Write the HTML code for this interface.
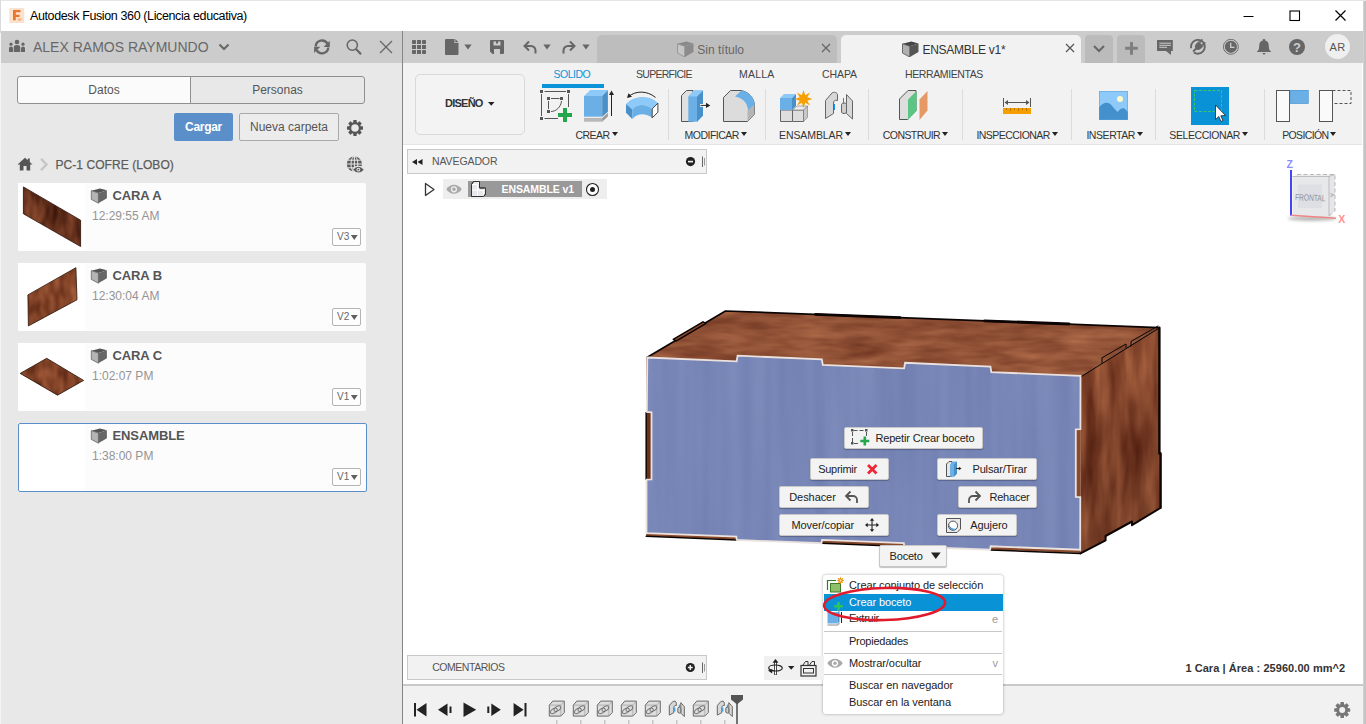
<!DOCTYPE html>
<html lang="es">
<head>
<meta charset="utf-8">
<title>Autodesk Fusion 360 (Licencia educativa)</title>
<style>
*{box-sizing:border-box;margin:0;padding:0}
html,body{width:1366px;height:724px;overflow:hidden;background:#fff;font-family:"Liberation Sans",sans-serif;color:#333}
.abs{position:absolute}
#app{position:relative;width:1366px;height:724px;overflow:hidden;background:#fff}
.t{position:absolute;white-space:nowrap;line-height:1}
/* title bar */
#titlebar{left:0;top:0;width:1366px;height:31px;background:#fff}
/* left panel */
#lp{left:0;top:31px;width:402px;height:693px;background:#e8e8e8}
#lphead{left:1px;top:31px;width:401px;height:32px;background:#cccccc}
#split{left:402px;top:31px;width:1px;height:693px;background:#858585}
.seg{border:1px solid #8f8f8f;font-size:12px;color:#555;text-align:center;line-height:26px;height:28px}
.btn{border-radius:2px;font-size:12px;text-align:center;height:28px;line-height:29px}
.card{left:18px;width:348px;height:68px;background:#fcfcfc;border-radius:2px}
.card .th{position:absolute;left:0;top:0;width:67px;height:100%;background:#fff}
.card .nm{position:absolute;left:94.500px;top:5.600px;font-size:13px;font-weight:bold;color:#555;line-height:13px;white-space:nowrap;letter-spacing:-0.1px}
.card .tm{position:absolute;left:74px;top:27px;font-size:12px;color:#949494;line-height:12px;white-space:nowrap}
.card .vb{position:absolute;left:314px;top:45px;width:28.500px;height:18px;border:1px solid #b4b4b4;background:#fdfdfd;font-size:10px;color:#666;line-height:15.500px;padding-left:4px;border-radius:2px}
.card .vb:after{content:"";position:absolute;right:1.500px;top:5.500px;width:7.500px;height:5.500px;background:#606060;clip-path:polygon(0 0,100% 0,50% 100%)}
.card .cube{position:absolute;left:72px;top:4px}
/* main */
#topbar{left:403px;top:31px;width:960px;height:32px;background:#cccccc}
#ribbon{left:403px;top:63px;width:959px;height:82px;background:#f2f2f2;border-bottom:1px solid #e4e4e4}
#canvas{left:403px;top:145px;width:960px;height:539px;background:#fff}
#timeline{left:403px;top:684px;width:960px;height:40px;background:#f1f1f1;border-top:2px solid #c9c9c9}
#redge{left:1363px;top:0;width:3px;height:724px;background:linear-gradient(to right,#dedede 0,#c4c4c4 1px,#c4c4c4 3px)}
.rt{position:absolute;font-size:11px;color:#444;white-space:nowrap;line-height:11px;top:69px}
.rl{position:absolute;font-size:11px;color:#333;white-space:nowrap;line-height:11px;top:130px}
.rl:after{content:"";display:inline-block;margin-left:2px;border:3.5px solid transparent;border-top:4px solid #222;border-bottom:0;vertical-align:3px}
.vsep{position:absolute;top:89px;width:1px;height:51px;background:#dcdcdc}
.mm{position:absolute;height:20px;background:#f3f3f3;border:1px solid #c8c8c8;border-radius:2px;font-size:11px;color:#222;line-height:18px;white-space:nowrap;box-shadow:0 1px 1px rgba(0,0,0,.25)}
.mm span{position:absolute;top:0}
#ctx{left:823px;top:575px;width:180px;height:139px;background:#fff;border-radius:3px;box-shadow:0 0 3px rgba(0,0,0,.35)}
#ctx .it{position:absolute;left:26px;font-size:11px;color:#222;line-height:11px;white-space:nowrap}
#ctx .sep{position:absolute;left:1px;width:178px;height:1px;background:#c8c8c8}
#ctx .sc{position:absolute;right:5px;font-size:11px;color:#999;line-height:11px}
</style>
</head>
<body>
<div id="app">

<!-- TITLE BAR -->
<div id="titlebar" class="abs">
  <svg class="abs" style="left:9px;top:7.500px" width="15.500" height="15" viewBox="0 0 16 16">
    <rect x="0" y="0" width="16" height="16" rx="1" fill="#fbe2cf"/>
    <path d="M4 2h8v2.6H7v2.6h4v2.4H7V13H4z" fill="#e8762c"/>
    <path d="M9 11h4v2.5H9z" fill="#f5b58a"/>
  </svg>
  <div class="t" style="left:30px;top:9.600px;font-size:12.500px;color:#000;letter-spacing:-0.38px">Autodesk Fusion 360 (Licencia educativa)</div>
  <svg class="abs" style="left:1239.500px;top:7.500px" width="112" height="16" viewBox="0 0 112 16">
    <path d="M3.5 8.5h10" stroke="#000" stroke-width="1" fill="none"/>
    <rect x="50" y="3" width="9.500" height="9.500" stroke="#000" stroke-width="1.100" fill="none"/>
    <path d="M95.500 2.500l10 10M105.500 2.500l-10 10" stroke="#000" stroke-width="1.200" fill="none"/>
  </svg>
</div>

<!-- LEFT PANEL -->
<div id="lp" class="abs"></div>
<div id="lphead" class="abs"></div>
<div id="split" class="abs"></div>

<svg class="abs" style="left:8px;top:39px" width="18" height="14" viewBox="0 0 18 14">
  <g fill="#666"><circle cx="9" cy="3" r="2.300"/><path d="M5.800 13V8.500a3.200 2.400 0 0 1 6.400 0V13z"/>
  <circle cx="3" cy="5.200" r="1.600"/><path d="M1 13V9.300a2 1.700 0 0 1 4 0V13z"/>
  <circle cx="15" cy="5.200" r="1.600"/><path d="M13 13V9.300a2 1.700 0 0 1 4 0V13z"/></g>
</svg>
<div class="t" style="left:33px;top:39.800px;font-size:14px;color:#686868">ALEX RAMOS RAYMUNDO</div>
<svg class="abs" style="left:217px;top:42px" width="14" height="10" viewBox="0 0 14 10"><path d="M2.500 2.500l4.500 4.500l4.500-4.500" fill="none" stroke="#666" stroke-width="2"/></svg>
<svg class="abs" style="left:312px;top:38px" width="20" height="18" viewBox="0 0 20 18">
  <g fill="none" stroke="#666" stroke-width="2.400"><path d="M3.700 8.300A6.300 6.300 0 0 1 15.400 5.600"/><path d="M16.300 9.500A6.300 6.300 0 0 1 4.600 12.200"/></g>
  <path d="M17.800 2.800V9H11.600z" fill="#666"/><path d="M2.100 15V8.800H8.300z" fill="#666"/>
</svg>
<svg class="abs" style="left:344px;top:38px" width="20" height="18" viewBox="0 0 20 18"><circle cx="8.300" cy="7.100" r="5.100" fill="none" stroke="#666" stroke-width="1.500"/><path d="M12 11l5 5.200" stroke="#666" stroke-width="2.200" fill="none"/></svg>
<svg class="abs" style="left:378px;top:39px" width="16" height="16" viewBox="0 0 16 16"><path d="M2 2l12 12M14 2L2 14" stroke="#666" stroke-width="1.300" fill="none"/></svg>


<div class="abs seg" style="left:17px;top:76px;width:174px;background:#fbfbfb;border-radius:3px 0 0 3px">Datos</div>
<div class="abs seg" style="left:190px;top:76px;width:175px;background:#e8e8e8;border-radius:0 3px 3px 0">Personas</div>
<div class="abs btn" style="left:174px;top:113px;width:59px;background:#5b8fca;color:#fff;font-weight:bold;letter-spacing:-0.3px">Cargar</div>
<div class="abs btn" style="left:239px;top:113px;width:100px;border:1px solid #a9a9a9;background:#ececec;color:#555;line-height:27px">Nueva carpeta</div>
<svg class="abs" style="left:346px;top:119px" width="18" height="18" viewBox="0 0 18 18">
  <g transform="translate(9 9)"><g fill="#555"><rect x="-1.700" y="-8" width="3.400" height="16" rx=".5"/><rect x="-1.700" y="-8" width="3.400" height="16" rx=".5" transform="rotate(45)"/><rect x="-1.700" y="-8" width="3.400" height="16" rx=".5" transform="rotate(90)"/><rect x="-1.700" y="-8" width="3.400" height="16" rx=".5" transform="rotate(135)"/><circle r="6"/></g><circle r="3.800" fill="#e8e8e8"/><circle r="2.400" fill="none" stroke="#555" stroke-width="0"/></g>
</svg>
<svg class="abs" style="left:17px;top:157px" width="16" height="14" viewBox="0 0 16 14"><path d="M8 .8L.5 7.500h2.300V13.500h3.700V9h3v4.500h3.700V7.500h2.300L12.800 5V1.500h-2V3.200z" fill="#555"/></svg>
<svg class="abs" style="left:39px;top:158px" width="10" height="13" viewBox="0 0 10 13"><path d="M2 .8l5.500 5.700L2 12.200" fill="none" stroke="#c6c6c6" stroke-width="2.400"/></svg>
<div class="t" style="left:55.500px;top:158.700px;font-size:12px;color:#5c5c5c;letter-spacing:.06px;-webkit-text-stroke:.25px #5c5c5c">PC-1 COFRE (LOBO)</div>
<svg class="abs" style="left:346px;top:156px" width="19" height="18" viewBox="0 0 19 18">
  <circle cx="8.400" cy="8" r="7.600" fill="#5a5a5a"/>
  <g stroke="#e8e8e8" stroke-width="1" fill="none"><ellipse cx="8.400" cy="8" rx="3.400" ry="7.600"/><path d="M.8 8h15.200M8.400 .4v15.200M2 4.200h12.800M2 11.800h12.800"/></g>
  <ellipse cx="12.400" cy="13.700" rx="6" ry="3.900" fill="#e8e8e8"/>
  <path d="M7 13.700q5.400-5.800 10.800 0q-5.400 5.800-10.800 0z" fill="#5a5a5a"/><circle cx="12.400" cy="13.700" r="1.900" fill="#e8e8e8"/><circle cx="12.400" cy="13.700" r=".9" fill="#5a5a5a"/>
</svg>
<div class="abs card" style="top:183px"><div class="th"></div><svg class="cube" width="18" height="17" viewBox="90 187 18 17"><path d="M91.300 190.700L99.900 188.400L106.900 190.300L98.400 193z" fill="#555"/><path d="M91.300 190.700L98.400 193V203.200L91.300 199.400z" fill="#b4b4b4" stroke="#666" stroke-width=".8" stroke-linejoin="round"/><path d="M98.400 193L106.900 190.300V198.300L98.400 203.200z" fill="#666"/></svg><div class="nm">CARA A</div><div class="tm">12:29:55 AM</div><div class="vb">V3</div></div>
<div class="abs card" style="top:263px"><div class="th"></div><svg class="cube" width="18" height="17" viewBox="90 187 18 17"><path d="M91.300 190.700L99.900 188.400L106.900 190.300L98.400 193z" fill="#555"/><path d="M91.300 190.700L98.400 193V203.200L91.300 199.400z" fill="#b4b4b4" stroke="#666" stroke-width=".8" stroke-linejoin="round"/><path d="M98.400 193L106.900 190.300V198.300L98.400 203.200z" fill="#666"/></svg><div class="nm">CARA B</div><div class="tm">12:30:04 AM</div><div class="vb">V2</div></div>
<div class="abs card" style="top:343px"><div class="th"></div><svg class="cube" width="18" height="17" viewBox="90 187 18 17"><path d="M91.300 190.700L99.900 188.400L106.900 190.300L98.400 193z" fill="#555"/><path d="M91.300 190.700L98.400 193V203.200L91.300 199.400z" fill="#b4b4b4" stroke="#666" stroke-width=".8" stroke-linejoin="round"/><path d="M98.400 193L106.900 190.300V198.300L98.400 203.200z" fill="#666"/></svg><div class="nm">CARA C</div><div class="tm">1:02:07 PM</div><div class="vb">V1</div></div>
<div class="abs card" style="top:423px;height:69px"><div class="th"></div><svg class="cube" width="18" height="17" viewBox="90 187 18 17"><path d="M91.300 190.700L99.900 188.400L106.900 190.300L98.400 193z" fill="#555"/><path d="M91.300 190.700L98.400 193V203.200L91.300 199.400z" fill="#b4b4b4" stroke="#666" stroke-width=".8" stroke-linejoin="round"/><path d="M98.400 193L106.900 190.300V198.300L98.400 203.200z" fill="#666"/></svg><div class="nm">ENSAMBLE</div><div class="tm">1:38:00 PM</div><div class="vb">V1</div></div>



<svg class="abs" style="left:18px;top:183px" width="68" height="228" viewBox="18 183 68 228">
<defs>
<filter id="ft1" x="0" y="0" width="100%" height="100%" color-interpolation-filters="sRGB"><feTurbulence type="fractalNoise" baseFrequency="0.12 0.04" numOctaves="2" seed="5" result="n"/><feColorMatrix in="n" type="matrix" values="0.45 0 0 0 0.165  0.3 0 0 0 0.04  0.2 0 0 0 0.01  0 0 0 0 1"/><feComposite in2="SourceAlpha" operator="in"/></filter>
<filter id="ft2" x="0" y="0" width="100%" height="100%" color-interpolation-filters="sRGB"><feTurbulence type="fractalNoise" baseFrequency="0.1 0.05" numOctaves="2" seed="9" result="n"/><feColorMatrix in="n" type="matrix" values="0.5 0 0 0 0.27  0.36 0 0 0 0.09  0.26 0 0 0 0.03  0 0 0 0 1"/><feComposite in2="SourceAlpha" operator="in"/></filter>
</defs>
<polygon points="23.400,186.900 80.600,220.200 80.600,246.500 23.400,213.800" fill="#6b3018" filter="url(#ft1)"/>
<polygon points="23.400,186.900 80.600,220.200 80.600,246.500 23.400,213.800" fill="none" stroke="#2a1008" stroke-width=".8"/>
<polygon points="27.900,294.900 75.900,267.700 77,299.800 28.400,325.900" fill="#7a3d22" filter="url(#ft2)"/>
<polygon points="27.900,294.900 75.900,267.700 77,299.800 28.400,325.900" fill="none" stroke="#2a1008" stroke-width=".8"/>
<polygon points="20.200,373.400 46.700,358.300 83.600,380.400 57.500,395.200" fill="#8a4526" filter="url(#ft2)"/>
<polygon points="20.200,373.400 46.700,358.300 83.600,380.400 57.500,395.200" fill="none" stroke="#2a1008" stroke-width=".8"/>
</svg>

<div class="abs" style="left:17.500px;top:422.500px;width:349px;height:69.500px;border:1px solid #5b8fca;border-radius:2px"></div>
<!-- MAIN -->
<div id="topbar" class="abs"></div>
<div id="ribbon" class="abs"></div>
<div id="canvas" class="abs"></div>
<div id="timeline" class="abs"></div>
<div id="redge" class="abs"></div>
<div class="abs" style="left:0;top:0;width:1366px;height:1px;background:#e6e6e6"></div>
<div class="abs" style="left:0;top:0;width:1px;height:33px;background:#d9dbde"></div><div class="abs" style="left:0;top:33px;width:1px;height:691px;background:#f4f4f4"></div>

<svg class="abs" style="left:412px;top:40px" width="14" height="14" viewBox="0 0 14 14"><g fill="#666"><rect x="0" y="0" width="4" height="4" rx=".8"/><rect x="5" y="0" width="4" height="4"/><rect x="10" y="0" width="4" height="4" rx=".8"/><rect x="0" y="5" width="4" height="4"/><rect x="5" y="5" width="4" height="4"/><rect x="10" y="5" width="4" height="4"/><rect x="0" y="10" width="4" height="4" rx=".8"/><rect x="5" y="10" width="4" height="4"/><rect x="10" y="10" width="4" height="4" rx=".8"/></g></svg>
<svg class="abs" style="left:445px;top:39px" width="14" height="16" viewBox="0 0 14 16"><path d="M1 0h8.500v4H13.500v11a1 1 0 0 1-1 1H1a1 1 0 0 1-1-1V1a1 1 0 0 1 1-1z" fill="#666"/><path d="M10.300 0l3.200 3.200h-3.200z" fill="#666"/></svg>
<svg class="abs" style="left:464px;top:44px" width="8" height="6" viewBox="0 0 8 6"><path d="M.3 .5h7.400L4 5.500z" fill="#666"/></svg>
<svg class="abs" style="left:490px;top:40px" width="14" height="14" viewBox="0 0 14 14"><path d="M1 0h12a1 1 0 0 1 1 1v12a1 1 0 0 1-1 1H2.500L0 11.500V1a1 1 0 0 1 1-1z" fill="#666"/><rect x="3.500" y="1.500" width="7" height="4" fill="#ccc"/><rect x="6" y="0" width="2" height="3.500" fill="#666"/><rect x="4" y="9" width="6" height="5" fill="#ccc"/></svg>
<svg class="abs" style="left:522px;top:40px" width="16" height="15" viewBox="0 0 16 15"><path d="M7 1.500L2.500 6L7 10.500M2.500 6H9a4.500 4.500 0 0 1 4.500 4.500V13.500" fill="none" stroke="#666" stroke-width="2"/></svg>
<svg class="abs" style="left:543px;top:44px" width="8" height="6" viewBox="0 0 8 6"><path d="M.3 .5h7.400L4 5.500z" fill="#666"/></svg>
<svg class="abs" style="left:561px;top:40px" width="16" height="15" viewBox="0 0 16 15"><path d="M9 1.500L13.500 6L9 10.500M13.500 6H7a4.500 4.500 0 0 0-4.500 4.500V13.500" fill="none" stroke="#666" stroke-width="2"/></svg>
<svg class="abs" style="left:582px;top:44px" width="8" height="6" viewBox="0 0 8 6"><path d="M.3 .5h7.400L4 5.500z" fill="#666"/></svg>
<div class="abs" style="left:597px;top:35px;width:240px;height:28px;background:#bdbdbd;border-radius:5px 5px 0 0"></div>
<svg class="abs" style="left:676.5px;top:40.5px" width="17" height="16.500" viewBox="90.800 188 16.600 15.600" preserveAspectRatio="none"><path d="M91.300 190.700L99.900 188.400L106.900 190.300L98.400 193z" fill="#8a8a8a"/><path d="M91.300 190.700L98.400 193V203.200L91.300 199.400z" fill="#c6c6c6" stroke="#8f8f8f" stroke-width=".8" stroke-linejoin="round"/><path d="M98.400 193L106.900 190.300V198.300L98.400 203.200z" fill="#8c8c8c"/></svg>
<div class="t" style="left:697.300px;top:43.500px;font-size:12px;color:#666">Sin título</div>
<svg class="abs" style="left:821px;top:43px" width="10" height="10" viewBox="0 0 10 10"><path d="M1 1l8 8M9 1L1 9" stroke="#666" stroke-width="1.200" fill="none"/></svg>
<div class="abs" style="left:841px;top:35px;width:240px;height:28px;background:#f2f2f2;border-radius:5px 5px 0 0"></div>
<svg class="abs" style="left:901.5px;top:40.5px" width="17" height="16.500" viewBox="90.800 188 16.600 15.600" preserveAspectRatio="none"><path d="M91.300 190.700L99.900 188.400L106.900 190.300L98.400 193z" fill="#444"/><path d="M91.300 190.700L98.400 193V203.200L91.300 199.400z" fill="#b0b0b0" stroke="#555" stroke-width=".8" stroke-linejoin="round"/><path d="M98.400 193L106.900 190.300V198.300L98.400 203.200z" fill="#555"/></svg>
<div class="t" style="left:922.400px;top:43.500px;font-size:12px;color:#333;letter-spacing:-0.25px">ENSAMBLE v1*</div>
<svg class="abs" style="left:1065px;top:43px" width="10" height="10" viewBox="0 0 10 10"><path d="M1 1l8 8M9 1L1 9" stroke="#555" stroke-width="1.200" fill="none"/></svg>
<div class="abs" style="left:1085px;top:35px;width:28px;height:28px;background:#bbbbbb;border-radius:4px 4px 0 0"></div>
<svg class="abs" style="left:1092px;top:44px" width="14" height="10" viewBox="0 0 14 10"><path d="M2 2l5 5l5-5" fill="none" stroke="#666" stroke-width="2"/></svg>
<div class="abs" style="left:1117px;top:35px;width:28px;height:28px;background:#bbbbbb;border-radius:4px 4px 0 0"></div>
<svg class="abs" style="left:1124px;top:41px" width="15" height="15" viewBox="0 0 15 15"><path d="M7.500 1v12.700M1.150 7.350h12.700" stroke="#7f7f7f" stroke-width="3" fill="none"/></svg>
<svg class="abs" style="left:1157px;top:40px" width="17" height="16" viewBox="0 0 17 16"><path d="M0 0h15.800v11H14V15L9 11H0z" fill="#666"/><path d="M2.300 3.200h11.700M2.300 5.300h11.700M2.300 7.300h7.700" stroke="#ccc" stroke-width="1"/></svg>
<svg class="abs" style="left:1190px;top:39px" width="16" height="16" viewBox="0 0 16 16"><circle cx="7.900" cy="7.800" r="6.900" fill="none" stroke="#666" stroke-width="1.900" stroke-dasharray="38.350 5" stroke-dashoffset="23.350"/><g transform="rotate(45 7.900 7.800) translate(7.900 7.800) scale(1.250) translate(-7.900 -8.300)"><path d="M5.100 4.800h5.600v3a2.800 2.800 0 0 1-2 2.700v3.200h-1.600v-3.200a2.800 2.800 0 0 1-2-2.700z" fill="#666"/><path d="M6.300 4.800V1.600M9.500 4.800V1.600" stroke="#666" stroke-width="1.400"/></g></svg>
<svg class="abs" style="left:1223px;top:39px" width="16" height="16" viewBox="0 0 16 16"><circle cx="7.900" cy="7.800" r="7.500" fill="none" stroke="#666" stroke-width=".9"/><circle cx="7.900" cy="7.800" r="6.100" fill="#666"/><path d="M7.700 3.700v4.600h3.800" fill="none" stroke="#ccc" stroke-width="1.300"/></svg>
<svg class="abs" style="left:1257px;top:39px" width="14" height="16" viewBox="0 0 14 16"><path d="M7 0a1.200 1.200 0 0 1 1.200 1.500C11 2.300 11.800 4.500 11.800 7c0 3 .7 4.500 2.200 5.500V13H0v-.5C1.500 11.500 2.200 10 2.200 7c0-2.500 .8-4.700 3.600-5.500A1.200 1.200 0 0 1 7 0z" fill="#666"/><path d="M5.500 14h3a1.500 1.500 0 0 1-3 0z" fill="#666"/></svg>
<div class="abs" style="left:1289px;top:39px;width:16px;height:16px;border-radius:8px;background:#666;color:#ccc;font-size:13px;font-weight:bold;text-align:center;line-height:17px">?</div>
<div class="abs" style="left:1325px;top:34px;width:25px;height:25px;border-radius:13px;background:#efefef;color:#555;font-size:11px;text-align:center;line-height:26px;letter-spacing:.3px">AR</div>

<div class="abs" style="left:415px;top:73.500px;width:110px;height:61px;border:1px solid #d9d9d9;border-radius:5px;background:#f3f3f3"></div>
<div class="t" style="left:445px;top:98px;font-size:11px;font-weight:bold;color:#333;letter-spacing:-0.75px">DISEÑO</div>
<svg class="abs" style="left:488px;top:102px" width="7" height="4" viewBox="0 0 7 4"><path d="M0 0h6.500L3.250 3.800z" fill="#222"/></svg>
<div class="rt" style="left:553.5px;font-size:10.500px;letter-spacing:-0.48px;color:#0d93d8">SOLIDO</div>
<div class="rt" style="left:636px;font-size:10.500px;letter-spacing:-0.73px">SUPERFICIE</div>
<div class="rt" style="left:739px;font-size:10.500px;letter-spacing:0.21px">MALLA</div>
<div class="rt" style="left:822px;font-size:10.500px;letter-spacing:-0.08px">CHAPA</div>
<div class="rt" style="left:905px;font-size:10.500px;letter-spacing:-0.39px">HERRAMIENTAS</div>
<div class="rl" style="left:575.5px;font-size:10.500px;letter-spacing:-0.55px">CREAR</div>
<div class="rl" style="left:684.6px;font-size:10.500px;letter-spacing:-0.52px">MODIFICAR</div>
<div class="rl" style="left:779px;font-size:10.500px;letter-spacing:-0.09px">ENSAMBLAR</div>
<div class="rl" style="left:882.8px;font-size:10.500px;letter-spacing:-0.58px">CONSTRUIR</div>
<div class="rl" style="left:976.4px;font-size:10.500px;letter-spacing:-0.54px">INSPECCIONAR</div>
<div class="rl" style="left:1086.4px;font-size:10.500px;letter-spacing:-0.44px">INSERTAR</div>
<div class="rl" style="left:1169.3px;font-size:10.500px;letter-spacing:-0.42px">SELECCIONAR</div>
<div class="rl" style="left:1282.2px;font-size:10.500px;letter-spacing:-0.64px">POSICIÓN</div>
<div class="abs" style="left:541.500px;top:84px;width:62px;height:3.500px;background:#0d93d8"></div>
<div class="vsep" style="left:667.5px"></div>
<div class="vsep" style="left:764.5px"></div>
<div class="vsep" style="left:867.5px"></div>
<div class="vsep" style="left:961.5px"></div>
<div class="vsep" style="left:1070.5px"></div>
<div class="vsep" style="left:1155px"></div>
<div class="vsep" style="left:1263.5px"></div>
<svg class="abs" style="left:404px;top:86px" width="959" height="42" viewBox="404 86 959 42">
<!-- sketch -->
<g fill="none" stroke="#555" stroke-width="1"><path d="M544.500 91.500H566M568.500 94V107M541.500 94V116M544.500 118.500H558"/><path d="M551 98.500H559.500M548.500 101V109"/><path d="M561.500 101C561 107 556 111.500 551 111.500" /></g>
<g fill="#555"><rect x="540" y="90" width="3" height="3"/><rect x="567" y="90" width="3" height="3"/><rect x="540" y="117" width="3" height="3"/><rect x="547" y="97" width="3" height="3"/><rect x="560" y="97" width="3" height="3"/><rect x="547" y="110" width="3" height="3"/></g>
<path d="M563 108h4v5h5v4h-5v5h-4v-5h-5v-4h5z" fill="#22a84a"/>
<!-- extrude -->
<path d="M584 96h18.200v20.700H584z" fill="#6aafe6"/><path d="M584 96l6.200-6h17.600l-5.600 6z" fill="#8ecaf9"/><path d="M602.200 96l5.700-6v21.700l-5.700 5z" fill="#4a90c8"/>
<path d="M584 117.900h18.200v3.800H584z" fill="#b8b8b8"/><path d="M602.200 117.900l5.700-5.200v3.800l-5.700 5.200z" fill="#9a9a9a"/>
<path d="M611.500 116V92" stroke="#222" stroke-width="1" fill="none"/><path d="M609 95l2.500-4.500l2.500 4.500z" fill="#222"/>
<!-- revolve -->
<path d="M626 104.100C633 95 651 94.500 657.900 103.100L652.200 108.900C646 103.500 637 103.500 632.200 109.300z" fill="#8ecaf9"/>
<path d="M626 104.100L632.200 109.300V118.900L626 112.700z" fill="#4a90c8"/>
<path d="M632.200 109.300C637 103.500 646 103.500 652.200 108.900V117.900C646 112.500 637 113 632.200 118.900z" fill="#6aafe6"/>
<path d="M652.200 108.900L657.900 103.100V112.200L652.200 117.900z" fill="#fff" stroke="#444" stroke-width="1"/>
<path d="M655.500 97.400C647 90.500 636 90.500 628.500 96.500" fill="none" stroke="#222" stroke-width="1"/><path d="M627 98l1.500-4.800l3.500 3.600z" fill="#222"/>
<!-- press pull -->
<path d="M681.500 121.500V95.500L686.500 90.500H693V121.500z" fill="#e0e0e0" stroke="#555" stroke-width="1"/>
<path d="M688.300 96.500L694 90.500H703V115.500L697 121.800H688.300z" fill="#6aafe6"/><path d="M697 96.500L703 90.500V115.500L697 121.800z" fill="#4a90c8"/><path d="M688.300 96.500L694 90.500H703L697 96.500z" fill="#8ecaf9"/>
<rect x="700" y="104" width="5" height="2.800" fill="#fff"/><path d="M700.500 105.400H708" stroke="#222" stroke-width="1"/><path d="M706 102.800l4.300 2.600l-4.300 2.600z" fill="#222"/>
<!-- fillet -->
<path d="M723.500 121.500V97.500L730.500 90.500H741C749 92 754 98 754.500 105.500V114.500L747.500 121.500z" fill="#dcdcdc" stroke="#555" stroke-width="1"/>
<path d="M747.500 121.500V110L754.500 104.500V114.500z" fill="#b5b5b5"/>
<path d="M735 96.500L741.500 90.500C749.500 92 754.500 98 754.700 104.500L748 110C747.500 103 743 98 735 96.500z" fill="#6aafe6"/>
<!-- new component -->
<path d="M780.500 110h12v11.500h-12z" fill="#dedede" stroke="#666" stroke-width="1"/><path d="M792.500 110h11v11.500h-11z" fill="#dedede" stroke="#666" stroke-width="1"/><path d="M792.500 110l4.500-4h10.500l-4 4z" fill="#ececec" stroke="#777" stroke-width=".6"/><path d="M803.500 110l4-4v11.500l-4 4z" fill="#c8c8c8" stroke="#777" stroke-width=".6"/>
<path d="M780 98h12v12h-12z" fill="#6aafe6"/><path d="M780 98l4-4h12l-4 4z" fill="#8ecaf9"/><path d="M792 98l4-4v12l-4 4z" fill="#4a90c8"/>
<path d="M803.500 90l1.700 5.200l4.800-2.700l-2.700 4.800l5.200 1.700l-5.200 1.700l2.700 4.800l-4.800-2.700l-1.700 5.200l-1.700-5.200l-4.800 2.700l2.700-4.800l-5.200-1.700l5.200-1.700l-2.700-4.800l4.800 2.700z" fill="#f5a000"/>
<!-- joint -->
<path d="M825.500 118.500V100.500L832 93C834 91.500 837.500 92.500 837.500 95V100.500C835 99.500 833.500 101 833.500 103V113.500z" fill="#d8d8d8" stroke="#666" stroke-width="1"/>
<path d="M846.500 94.500L852.500 101V119L846.500 113.500z" fill="#d8d8d8" stroke="#666" stroke-width="1"/><path d="M841.500 104.500C841.500 102.500 846.500 102.500 846.500 104.500V112C846.500 114 841.500 114 841.500 112z" fill="#cfcfcf" stroke="#666" stroke-width="1"/>
<path d="M834.500 104V110M843.500 98V104" stroke="#1a8fe0" stroke-width="1"/>
<!-- construct -->
<path d="M899.500 119.500V99L908 90.500H916V110.500L907.500 119.500z" fill="#dedede" stroke="#555" stroke-width="1"/>
<path d="M908 99.500L916.500 91V111L908 120z" fill="#5cc583"/><path d="M919.500 99.500L927.500 91V110.500L919.500 120z" fill="#e69965"/>
<!-- measure -->
<rect x="1003" y="108" width="28" height="6" fill="#f5a000"/><path d="M1006.500 108v2M1010.500 108v3M1014.500 108v2M1018.500 108v3M1022.500 108v2M1026.500 108v3" stroke="#b87400" stroke-width="1"/>
<path d="M1003.500 98V107M1030.500 98V107M1005 102.500H1029" stroke="#555" stroke-width="1" fill="none"/><path d="M1008 100l-3.500 2.500l3.500 2.500zM1026 100l3.500 2.500l-3.500 2.500z" fill="#555"/>
<!-- insert -->
<rect x="1099" y="91" width="29" height="29" fill="#8ecaf9"/><path d="M1099 107.500C1102 103.500 1106 101.500 1109.500 103.500C1112 105 1114 109 1117.500 112C1120 109 1122 107.500 1124.500 108.500L1128 112V120H1099z" fill="#4490cc"/><circle cx="1120" cy="99" r="3" fill="#fffac8"/>
<rect x="1099.250" y="91.250" width="28.500" height="28.500" fill="none" stroke="#5aa0d8" stroke-width=".5"/>
<!-- select -->
<rect x="1191" y="87" width="38" height="38" fill="#0a92d6"/><rect x="1194.500" y="90.500" width="27" height="21" fill="none" stroke="#3cc46a" stroke-width="1" stroke-dasharray="3 1.500"/>
<path d="M1215.500 105V119.500L1218.800 116.500L1221 121.500L1223 120.600L1220.800 115.800L1225.500 115.500z" fill="#fff" stroke="#222" stroke-width=".8"/>
<!-- position -->
<rect x="1276.500" y="90.500" width="13" height="31" fill="#fafafa" stroke="#555" stroke-width="1"/><rect x="1290" y="90" width="18.500" height="13.800" fill="#6aafe6"/><rect x="1290" y="90.250" width="18.250" height="13.300" fill="none" stroke="#4a90c8" stroke-width=".5"/>
<rect x="1319.500" y="90.500" width="13" height="31" fill="#fafafa" stroke="#555" stroke-width="1"/><path d="M1332.500 90.500H1351V103.500H1332.500" fill="none" stroke="#555" stroke-width="1" stroke-dasharray="3 2"/>
</svg>


<div class="abs" style="left:407px;top:149px;width:300px;height:25px;background:#f2f2f2;border:1px solid #c9c9c9"></div>
<svg class="abs" style="left:412px;top:158px" width="11" height="8" viewBox="0 0 11 8"><path d="M5 1v6L0 4zM10.500 1v6L5.500 4z" fill="#222"/></svg>
<div class="t" style="left:432px;top:156px;font-size:10.500px;color:#555;letter-spacing:-0.10px">NAVEGADOR</div>
<svg class="abs" style="left:685px;top:156px" width="22" height="12" viewBox="0 0 22 12"><circle cx="5.500" cy="5.600" r="4.600" fill="#222"/><rect x="3" y="4.800" width="5" height="1.600" fill="#f2f2f2"/><path d="M17.500 .5v10.500" stroke="#666" stroke-width="1"/><path d="M19.500 2v7.500" stroke="#999" stroke-width="1"/></svg>
<div class="abs" style="left:443px;top:179px;width:164px;height:20px;background:#eeeeee"></div>
<svg class="abs" style="left:424px;top:182px" width="12" height="15" viewBox="0 0 12 15"><path d="M1.500 1.500L10 7.500L1.500 13.500z" fill="#fff" stroke="#333" stroke-width="1.300" stroke-linejoin="round"/></svg>
<svg class="abs" style="left:446px;top:184px" width="16" height="11" viewBox="0 0 16 11"><path d="M.3 5.300C4 -.8 12 -.8 15.700 5.300C12 11.200 4 11.200 .3 5.300z" fill="#a9a9a9"/><circle cx="8" cy="5.300" r="3.100" fill="#eee"/><circle cx="8" cy="5.300" r="1.700" fill="#a9a9a9"/></svg>
<div class="abs" style="left:468px;top:181px;width:114px;height:16px;background:#999"></div>
<svg class="abs" style="left:470px;top:180px" width="18" height="18" viewBox="0 0 18 18"><path d="M1.500 16.500V4.500L3.500 1.500H9.500V8H15.500V14L13.500 16.500z" fill="#e8e8ec" stroke="#333" stroke-width="1" stroke-linejoin="round"/><path d="M7.500 16.500V10L9.500 8M7.500 10H1.500M13.500 16.500V10.500L15.500 8M13.500 10.500H7.500M7.500 4.500H1.500M7.500 4.500L9.500 1.500M7.500 4.500V10" fill="none" stroke="#fff" stroke-width=".9"/><path d="M1.500 16.500V4.500L3.500 1.500H9.500V8H15.500V14L13.500 16.500z" fill="none" stroke="#333" stroke-width="1" stroke-linejoin="round"/></svg>
<div class="t" style="left:501.500px;top:184px;font-size:10.500px;font-weight:bold;color:#fff;letter-spacing:-0.10px">ENSAMBLE v1</div>
<svg class="abs" style="left:585px;top:182px" width="15" height="15" viewBox="0 0 15 15"><circle cx="7.500" cy="7.500" r="6" fill="#fff" stroke="#222" stroke-width="1.100"/><circle cx="7.500" cy="7.500" r="2.500" fill="#222"/></svg>
<!-- viewcube -->
<svg class="abs" style="left:1270px;top:155px" width="90" height="75" viewBox="1270 155 90 75">
<defs><filter id="vb" x="-20%" y="-100%" width="140%" height="300%"><feGaussianBlur stdDeviation="1.500"/></filter></defs>
<ellipse cx="1312" cy="218.500" rx="24" ry="2.500" fill="#bbb" filter="url(#vb)"/>
<path d="M1292.500 176.500L1297 174.500H1335L1329 176.500z" fill="#ececee"/>
<path d="M1329 176.500L1335 174.500V211L1329 216z" fill="#e6e6e9"/>
<rect x="1292.500" y="176.500" width="36.500" height="39.500" fill="#e7e8ea"/>
<rect x="1298" y="184.500" width="24" height="23.500" fill="#dddfe4"/>
<path d="M1297 174.500H1335V211L1329 216" fill="none" stroke="#a8a8a8" stroke-width=".8" stroke-dasharray="4 2.500"/>
<path d="M1329 176.500V216M1292.500 176.500H1329L1335 174.500" fill="none" stroke="#aaa" stroke-width=".7"/>
<path d="M1291 170V215.500" stroke="#4545f2" stroke-width="2"/>
<path d="M1291 215.200L1336 218.300" stroke="#f08585" stroke-width="1.600"/>
<text x="1295" y="200.800" font-family="Liberation Sans, sans-serif" font-size="9" fill="#8d9199" textLength="30.500" lengthAdjust="spacingAndGlyphs" transform="rotate(2 1310 197)">FRONTAL</text>
<text x="1286.500" y="167.800" font-family="Liberation Sans, sans-serif" font-size="10.500" font-weight="bold" fill="#8c8cff">Z</text>
<text x="1338.300" y="222.500" font-family="Liberation Sans, sans-serif" font-size="10.500" font-weight="bold" fill="#ff9090">X</text>
<text x="1331" y="196" font-family="Liberation Sans, sans-serif" font-size="6" fill="#999" transform="rotate(80 1332 194)">A</text>
</svg>


<svg class="abs" style="left:630px;top:300px" width="545" height="265" viewBox="630 300 545 265">
<defs>
<filter id="fw1" x="0" y="0" width="100%" height="100%" color-interpolation-filters="sRGB"><feTurbulence type="fractalNoise" baseFrequency="0.018 0.085" numOctaves="3" seed="7" result="n"/><feColorMatrix in="n" type="matrix" values="0.38 0 0 0 0.372  0.32 0 0 0 0.157  0.24 0 0 0 0.09  0 0 0 0 1"/><feComposite in2="SourceAlpha" operator="in"/></filter>
<filter id="fw2" x="0" y="0" width="100%" height="100%" color-interpolation-filters="sRGB"><feTurbulence type="fractalNoise" baseFrequency="0.07 0.012" numOctaves="3" seed="11" result="n"/><feColorMatrix in="n" type="matrix" values="0.45 0 0 0 0.295  0.36 0 0 0 0.092  0.26 0 0 0 0.04  0 0 0 0 1"/><feComposite in2="SourceAlpha" operator="in"/></filter>
<filter id="fb" x="0" y="0" width="100%" height="100%" color-interpolation-filters="sRGB"><feTurbulence type="fractalNoise" baseFrequency="0.07 0.004" numOctaves="2" seed="3" result="n"/><feColorMatrix in="n" type="matrix" values="0.07 0 0 0 0.432  0.07 0 0 0 0.49  0.06 0 0 0 0.684  0 0 0 0 1"/><feComposite in2="SourceAlpha" operator="in"/></filter>
<linearGradient id="rsh" x1="0" y1="0" x2="0" y2="1"><stop offset="0" stop-color="#000" stop-opacity="0"/><stop offset="1" stop-color="#000" stop-opacity=".12"/></linearGradient>
</defs>
<!-- front wood tabs behind -->
<polygon points="646.2,357.4 1081,375.9 1080.5,553.1 646.2,536.1" fill="#8a4a2c"/>
<path d="M646.200 412V480" stroke="#1a0a04" stroke-width="1.600"/>
<rect x="647" y="412.500" width="4.500" height="66.500" fill="#6b3219"/>
<!-- top face -->
<polygon points="647.3,357.5 725.5,311 1158.7,327.6 1081,375.9" fill="#94543a" filter="url(#fw1)"/>
<!-- right face -->
<polygon points="1081,375.9 1159,327.8 1159.3,453 1160.4,453.5 1160.4,507.5 1132,524.8 1132,521 1105.6,535.5 1105.6,539.8 1080.5,553" fill="#7d4128" filter="url(#fw2)"/>
<polygon points="1081,375.9 1159,327.8 1159.3,453 1160.4,453.5 1160.4,507.5 1132,524.8 1132,521 1105.6,535.5 1105.6,539.8 1080.5,553" fill="url(#rsh)"/>
<!-- edges -->
<g fill="none" stroke="#0c0503" stroke-linejoin="round" stroke-linecap="round">
<path d="M647.300 357.2L725.500 311L1158.700 327.600" stroke-width="1.700"/>
<path d="M815.600 314.300L900 317.600M984.600 320.800L1069 324" stroke-width="2.800"/>
<path d="M676.500 340.800L673.200 339.300L703 321.800L706 323.300z" stroke-width="1.400" fill="#8a4a2c"/>
<path d="M1159.400 327.800V453.500M1160.600 453.500V507.500" stroke-width="2.400"/>
<path d="M1160.400 508L1132 525.200V521.500L1105.600 536V540.300L1080.500 553.400" stroke-width="2"/>
<path d="M1081.400 376.4L1158.500 328.300" stroke-width="1.100"/>
<path d="M1102 362.500V357.800L1126 344V347.500M1131 346V341.500L1158 326" stroke-width="1"/>
<path d="M1080.500 553.4L990.600 549.9M904.300 546.4L822 543.3M736.800 540.0L646.200 536.3" stroke-width="1.500"/>
</g>
<!-- blue face -->
<polygon points="647.3,357.5 736.6,361.3 737.6,355.7 821.8,359.3 822.8,364.9 904.1,368.4 905.1,362.8 990.4,366.5 991.4,372.1 1080.5,375.9 1080.4,429.2 1075.8,429.4 1075.8,497.0 1080.3,497.2 1080.2,549.7 990.6,546.3 990.1,549.7 904.3,546.4 903.8,543.0 822.0,539.9 821.5,543.2 736.8,540.0 736.3,536.6 646.5,533.2 646.5,479.5 651.5,479.3 651.5,412.3 646.8,412.0" fill="#7786b6" filter="url(#fb)"/>
<polygon points="647.3,357.5 736.6,361.3 737.6,355.7 821.8,359.3 822.8,364.9 904.1,368.4 905.1,362.8 990.4,366.5 991.4,372.1 1080.5,375.9 1080.4,429.2 1075.8,429.4 1075.8,497.0 1080.3,497.2 1080.2,549.7 990.6,546.3 990.1,549.7 904.3,546.4 903.8,543.0 822.0,539.9 821.5,543.2 736.8,540.0 736.3,536.6 646.5,533.2 646.5,479.5 651.5,479.3 651.5,412.3 646.8,412.0" fill="none" stroke="#ebe2df" stroke-width="1.800" stroke-linejoin="miter"/>
</svg>

<div class="mm" style="left:843.5px;top:427px;width:139px;height:22px"><span style="left:30.9px;top:1px;letter-spacing:-0.15px">Repetir Crear boceto</span><svg class="abs" style="left:6.5px;top:1.0px" width="19" height="17" viewBox="0 0 19 17"><g fill="none" stroke="#555" stroke-width="1" stroke-dasharray="4 2"><path d="M2.500 1.500H14.500M1.500 3V13.500M15.500 3V8M3 14.500H9"/></g><g fill="#555"><rect x="0" y="0" width="2.500" height="2.500"/><rect x="14" y="0" width="2.500" height="2.500"/><rect x="0" y="13" width="2.500" height="2.500"/></g><path d="M12.500 9h2.600v3.200h3.200v2.600h-3.200v3.200h-2.600v-3.200h-3.200v-2.600h3.200z" fill="#22a84a" transform="translate(0 -1.500)"/></svg></div>
<div class="mm" style="left:809.5px;top:458px;width:79.5px;height:22px"><span style="left:7.7px;top:1px;letter-spacing:-0.28px">Suprimir</span><svg class="abs" style="left:55.0px;top:3.5px" width="13" height="13" viewBox="0 0 13 13"><path d="M2 2l8.500 8.500M10.500 2L2 10.500" stroke="#ee2737" stroke-width="2.800" fill="none"/></svg></div>
<div class="mm" style="left:937.3px;top:458px;width:99.5px;height:22px"><span style="left:34.2px;top:1px;letter-spacing:-0.16px">Pulsar/Tirar</span><svg class="abs" style="left:6.7px;top:1.0px" width="18" height="18" viewBox="0 0 18 18"><path d="M1.500 16.500V4L4 1.500H7V16.500z" fill="#e6e6e6" stroke="#555" stroke-width="1"/><path d="M5 4.500L8 1.500H12V13.500L9 16.800H5z" fill="#6aafe6"/><path d="M9 4.500L12 1.500V13.500L9 16.800z" fill="#4a90c8"/><path d="M11 8.500h3.500" stroke="#222" stroke-width="1"/><path d="M13.800 6.800l2.700 1.700l-2.700 1.700z" fill="#222"/></svg></div>
<div class="mm" style="left:779.4px;top:486.2px;width:89.3px;height:22px"><span style="left:8.8px;top:1px;letter-spacing:-0.06px">Deshacer</span><svg class="abs" style="left:63.6px;top:2.8px" width="16" height="14" viewBox="0 0 16 14"><path d="M6.500 1.500L2 6L6.500 10.500M2 6H9a4 4 0 0 1 4 4V13" fill="none" stroke="#555" stroke-width="1.800"/></svg></div>
<div class="mm" style="left:957.5px;top:486.2px;width:79.3px;height:22px"><span style="left:30.9px;top:1px;letter-spacing:-0.20px">Rehacer</span><svg class="abs" style="left:7.5px;top:2.8px" width="16" height="14" viewBox="0 0 16 14"><path d="M9.500 1.500L14 6L9.500 10.500M14 6H7a4 4 0 0 0-4 4V13" fill="none" stroke="#555" stroke-width="1.800"/></svg></div>
<div class="mm" style="left:779.4px;top:514.3px;width:109.5px;height:22px"><span style="left:11.0px;top:1px;letter-spacing:-0.08px">Mover/copiar</span><svg class="abs" style="left:82.6px;top:1.2px" width="18" height="18" viewBox="0 0 18 18"><g transform="translate(2 2) scale(.78)"><path d="M9 1.500V16.500M1.500 9H16.500" stroke="#222" stroke-width="1.400" fill="none"/><path d="M9 0l2.800 3.500h-5.600zM9 18l2.800-3.500h-5.600zM0 9l3.500-2.800v5.600zM18 9l-3.500-2.800v5.600z" fill="#222"/></g></svg></div>
<div class="mm" style="left:937.3px;top:514.3px;width:79.3px;height:22px"><span style="left:32.0px;top:1px;letter-spacing:-0.09px">Agujero</span><svg class="abs" style="left:6.7px;top:1.7px" width="17" height="17" viewBox="0 0 17 17"><path d="M1.500 1.500H15.500V12L12 15.500H1.500z" fill="#e9e9e9" stroke="#555" stroke-width="1"/><circle cx="8" cy="8.700" r="4.600" fill="#fff" stroke="#555" stroke-width="1"/><path d="M4.200 7.500A4 4 0 0 0 11 11.500A5.500 5.500 0 0 1 4.200 7.500z" fill="#4a9be0"/></svg></div>
<div class="mm" style="left:878.6px;top:545px;width:68.8px;height:22px"><span style="left:10.0px;top:1px;letter-spacing:-0.21px">Boceto</span><svg class="abs" style="left:51.9px;top:6.0px" width="10" height="8" viewBox="0 0 10 8"><path d="M0 .5h9.600L4.800 7z" fill="#222"/></svg></div>

<div id="ctx" class="abs">
<div class="abs" style="left:1px;top:19px;width:178.500px;height:17px;background:#0a92d6"></div>
<svg class="abs" style="left:3px;top:1px" width="18" height="18" viewBox="0 0 18 18"><path d="M1.500 14V4.500H10" fill="none" stroke="#2d7a2d" stroke-width="1.200"/><rect x="4.500" y="7.500" width="10" height="8.500" fill="#8fbf6a" stroke="#3c7d2a" stroke-width="1"/><path d="M14.500 .5l.7 2.200l2.100-1l-1 2.100l2.200.7l-2.200.7l1 2.100l-2.100-1l-.7 2.200l-.7-2.200l-2.100 1l1-2.100l-2.200-.7l2.200-.7l-1-2.100l2.100 1z" fill="#f08a00"/><circle cx="14.500" cy="4.500" r="1" fill="#fff2cc"/></svg>
<svg class="abs" style="left:3px;top:20px" width="18" height="17" viewBox="0 0 18 17"><path d="M1.500 1V12M3 14.500H8M15.500 1V6" fill="none" stroke="#3a7aa8" stroke-width="1" stroke-dasharray="3 2"/><path d="M11.200 7h2.600v3h3v2.600h-3v3h-2.600v-3h-3V10h3z" fill="#2ec45a"/></svg>
<svg class="abs" style="left:3px;top:36px" width="18" height="17" viewBox="0 0 18 17"><path d="M1.500 1h10v11.500h-10z" fill="#6aafe6"/><path d="M11.500 1l2-1v10.500l-2 2z" fill="#4a90c8"/><path d="M1.500 13h10v2h-10z" fill="#c4c4c4"/><path d="M11.500 13l2-2v2l-2 2z" fill="#a0a0a0"/><path d="M15.500 12V1" stroke="#222" stroke-width="1"/></svg>
<svg class="abs" style="left:4px;top:83px" width="16" height="11" viewBox="0 0 16 11"><path d="M.3 5.300C4 -.8 12 -.8 15.700 5.300C12 11.200 4 11.200 .3 5.300z" fill="#a9a9a9"/><circle cx="8" cy="5.300" r="3.100" fill="#fff"/><circle cx="8" cy="5.300" r="1.700" fill="#a9a9a9"/></svg>
<div class="it" style="top:4.5px;letter-spacing:-0.08px">Crear conjunto de selección</div>
<div class="it" style="top:21.5px;letter-spacing:-0.11px;color:#fff">Crear boceto</div>
<div class="it" style="top:38.3px;letter-spacing:-0.25px">Extruir</div>
<div class="sc" style="top:39px">e</div>
<div class="sep" style="top:55.500px"></div>
<div class="it" style="top:60.5px;letter-spacing:-0.25px">Propiedades</div>
<div class="sep" style="top:77.500px"></div>
<div class="it" style="top:82.5px;letter-spacing:-0.06px">Mostrar/ocultar</div>
<div class="sc" style="top:83px">v</div>
<div class="sep" style="top:99px"></div>
<div class="it" style="top:104.7px;letter-spacing:-0.02px">Buscar en navegador</div>
<div class="it" style="top:121.7px;letter-spacing:-0.07px">Buscar en la ventana</div>
</div>
<svg class="abs" style="left:815px;top:580px" width="140" height="48" viewBox="815 580 140 48"><ellipse cx="884.600" cy="604" rx="60.500" ry="16" fill="none" stroke="#e01b2c" stroke-width="2.600" transform="rotate(-1.500 884.600 604)"/></svg>

<div class="abs" style="left:407px;top:655px;width:300px;height:24.500px;background:#f2f2f2;border:1px solid #c9c9c9"></div>
<div class="t" style="left:432.200px;top:661.500px;font-size:10.500px;color:#555;letter-spacing:-0.46px">COMENTARIOS</div>
<svg class="abs" style="left:685px;top:662px" width="22" height="12" viewBox="0 0 22 12"><circle cx="5.300" cy="5.500" r="4.600" fill="#222"/><path d="M2.800 5.500h5M5.300 3v5" stroke="#f2f2f2" stroke-width="1.500"/><path d="M17.500 .5v10.500" stroke="#666" stroke-width="1"/><path d="M19.500 2v7.500" stroke="#999" stroke-width="1"/></svg>
<div class="abs" style="left:764px;top:656px;width:60px;height:24px;background:#f1f1f1"></div>
<svg class="abs" style="left:767px;top:659px" width="17" height="18" viewBox="0 0 17 18"><path d="M8.500 2.500V16" stroke="#222" stroke-width="2.600"/><path d="M8.500 2.500V15.500" stroke="#fff" stroke-width="1"/><path d="M8.500 0l3 3.800h-6z" fill="#222"/><ellipse cx="8.500" cy="9" rx="6.800" ry="3" fill="none" stroke="#222" stroke-width="1.200"/><path d="M1 11.500l4.200-1.500v4.500z" fill="#222"/></svg>
<svg class="abs" style="left:788px;top:666px" width="7" height="4" viewBox="0 0 7 4"><path d="M0 0h6.400L3.200 3.800z" fill="#222"/></svg>
<svg class="abs" style="left:800px;top:660px" width="17" height="17" viewBox="0 0 17 17"><rect x="1" y="5.500" width="15" height="10.500" fill="none" stroke="#333" stroke-width="1.200"/><rect x="3.500" y="8.500" width="10" height="4.500" fill="none" stroke="#333" stroke-width="1"/><path d="M3 5L5.500 1.500H8V5M9.500 5L12 1.500H14.500V5" fill="none" stroke="#333" stroke-width="1"/></svg>
<div class="t" style="left:1185.400px;top:663px;font-size:11px;font-weight:bold;color:#333;letter-spacing:0.06px">1 Cara | Área : 25960.00 mm^2</div>
<svg class="abs" style="left:404px;top:690px" width="959" height="34" viewBox="404 690 959 34">
<g fill="#222"><path d="M414 703h2v13.500h-2zM426.500 703v13.500L416.500 709.800z"/><path d="M438 709.800L447.500 703.500v12.600zM449.500 706.500h2v6.600h-2z"/><path d="M463.500 702.500v14.600L476.200 709.800z"/><path d="M487.300 706.500h2v6.600h-2zM491.300 703.500v12.600L500.800 709.800z"/><path d="M513.600 703v13.500L523.600 709.800zM524.500 703h2v13.500h-2z"/></g>
<g transform="translate(548.8 700.600)"><path d="M.5 4.500L4 .5H15.500V12L12 15.500H.5z" fill="#dedede" stroke="#6a6a6a" stroke-width="1"/><path d="M.5 4.500H12V15.500M12 4.500L15.500 .5" fill="none" stroke="#999" stroke-width=".7"/><g fill="none" stroke="#777" stroke-width="1"><ellipse cx="5" cy="10.300" rx="2.100" ry="3.800" transform="rotate(55 5 10.300)"/><ellipse cx="8.600" cy="8" rx="2.100" ry="3.800" transform="rotate(55 8.600 8)"/></g><path d="M8 19.500v5" stroke="#bbb" stroke-width="1.200"/></g>
<g transform="translate(572.8 700.600)"><path d="M.5 4.500L4 .5H15.500V12L12 15.500H.5z" fill="#dedede" stroke="#6a6a6a" stroke-width="1"/><path d="M.5 4.500H12V15.500M12 4.500L15.500 .5" fill="none" stroke="#999" stroke-width=".7"/><g fill="none" stroke="#777" stroke-width="1"><ellipse cx="5" cy="10.300" rx="2.100" ry="3.800" transform="rotate(55 5 10.300)"/><ellipse cx="8.600" cy="8" rx="2.100" ry="3.800" transform="rotate(55 8.600 8)"/></g><path d="M8 19.500v5" stroke="#bbb" stroke-width="1.200"/></g>
<g transform="translate(596.8 700.600)"><path d="M.5 4.500L4 .5H15.500V12L12 15.500H.5z" fill="#dedede" stroke="#6a6a6a" stroke-width="1"/><path d="M.5 4.500H12V15.500M12 4.500L15.500 .5" fill="none" stroke="#999" stroke-width=".7"/><g fill="none" stroke="#777" stroke-width="1"><ellipse cx="5" cy="10.300" rx="2.100" ry="3.800" transform="rotate(55 5 10.300)"/><ellipse cx="8.600" cy="8" rx="2.100" ry="3.800" transform="rotate(55 8.600 8)"/></g><path d="M8 19.500v5" stroke="#bbb" stroke-width="1.200"/></g>
<g transform="translate(620.8 700.600)"><path d="M.5 4.500L4 .5H15.500V12L12 15.500H.5z" fill="#dedede" stroke="#6a6a6a" stroke-width="1"/><path d="M.5 4.500H12V15.500M12 4.500L15.500 .5" fill="none" stroke="#999" stroke-width=".7"/><g fill="none" stroke="#777" stroke-width="1"><ellipse cx="5" cy="10.300" rx="2.100" ry="3.800" transform="rotate(55 5 10.300)"/><ellipse cx="8.600" cy="8" rx="2.100" ry="3.800" transform="rotate(55 8.600 8)"/></g><path d="M8 19.500v5" stroke="#bbb" stroke-width="1.200"/></g>
<g transform="translate(644.8 700.600)"><path d="M.5 4.500L4 .5H15.500V12L12 15.500H.5z" fill="#dedede" stroke="#6a6a6a" stroke-width="1"/><path d="M.5 4.500H12V15.500M12 4.500L15.500 .5" fill="none" stroke="#999" stroke-width=".7"/><g fill="none" stroke="#777" stroke-width="1"><ellipse cx="5" cy="10.300" rx="2.100" ry="3.800" transform="rotate(55 5 10.300)"/><ellipse cx="8.600" cy="8" rx="2.100" ry="3.800" transform="rotate(55 8.600 8)"/></g><path d="M8 19.500v5" stroke="#bbb" stroke-width="1.200"/></g>
<g transform="translate(668.8 700.600)"><path d="M.5 14.500V5L4 1C5.500 0 7.500 .5 7.500 2.500V5C6 4.500 5 5.500 5 7V12z" fill="#d8d8d8" stroke="#666" stroke-width="1"/><path d="M12 2l3.500 4V16L12 12.500z" fill="#d8d8d8" stroke="#666" stroke-width="1"/><path d="M9 7.500C9 6.300 12 6.300 12 7.500V11.500C12 12.800 9 12.800 9 11.500z" fill="#cfcfcf" stroke="#666" stroke-width="1"/><path d="M6 7V11M10.500 4V7" stroke="#1a8fe0" stroke-width="1"/><path d="M8 19.500v5" stroke="#bbb" stroke-width="1.200"/></g>
<g transform="translate(692.8 700.600)"><path d="M.5 4.500L4 .5H15.500V12L12 15.500H.5z" fill="#dedede" stroke="#6a6a6a" stroke-width="1"/><path d="M.5 4.500H12V15.500M12 4.500L15.500 .5" fill="none" stroke="#999" stroke-width=".7"/><g fill="none" stroke="#777" stroke-width="1"><ellipse cx="5" cy="10.300" rx="2.100" ry="3.800" transform="rotate(55 5 10.300)"/><ellipse cx="8.600" cy="8" rx="2.100" ry="3.800" transform="rotate(55 8.600 8)"/></g><path d="M8 19.500v5" stroke="#bbb" stroke-width="1.200"/></g>
<g transform="translate(716.8 700.600)"><path d="M.5 14.500V5L4 1C5.500 0 7.500 .5 7.500 2.500V5C6 4.500 5 5.500 5 7V12z" fill="#d8d8d8" stroke="#666" stroke-width="1"/><path d="M12 2l3.500 4V16L12 12.500z" fill="#d8d8d8" stroke="#666" stroke-width="1"/><path d="M9 7.500C9 6.300 12 6.300 12 7.500V11.500C12 12.800 9 12.800 9 11.500z" fill="#cfcfcf" stroke="#666" stroke-width="1"/><path d="M6 7V11M10.500 4V7" stroke="#1a8fe0" stroke-width="1"/><path d="M8 19.500v5" stroke="#bbb" stroke-width="1.200"/></g>
<path d="M731 695h12v4.500L737.500 704h-1L731 699.500z" fill="#555"/><path d="M737 700v24" stroke="#555" stroke-width="1.600"/>
<g transform="translate(1342.200 710)"><g fill="#777"><rect x="-1.800" y="-8" width="3.600" height="16" rx=".6"/><rect x="-1.800" y="-8" width="3.600" height="16" rx=".6" transform="rotate(45)"/><rect x="-1.800" y="-8" width="3.600" height="16" rx=".6" transform="rotate(90)"/><rect x="-1.800" y="-8" width="3.600" height="16" rx=".6" transform="rotate(135)"/><circle r="6"/></g><circle r="3" fill="#f1f1f1"/></g>
</svg>


</div>
</body>
</html>
